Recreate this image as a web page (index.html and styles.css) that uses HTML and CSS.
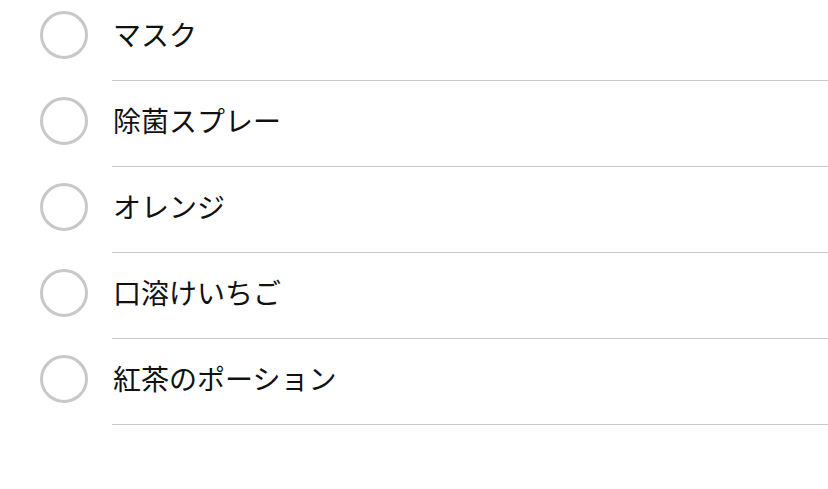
FILE: index.html
```html
<!DOCTYPE html>
<html lang="ja">
<head>
<meta charset="utf-8">
<link rel="stylesheet" href="styles.css">
</head>
<body>
<ul class="list">
  <li class="row"><span class="check"></span><span class="label">マスク</span></li>
  <li class="row"><span class="check"></span><span class="label">除菌スプレー</span></li>
  <li class="row"><span class="check"></span><span class="label">オレンジ</span></li>
  <li class="row"><span class="check"></span><span class="label">口溶けいちご</span></li>
  <li class="row"><span class="check"></span><span class="label">紅茶のポーション</span></li>
</ul>
</body>
</html>
```
FILE: styles.css
```css
html, body {
  margin: 0;
  padding: 0;
  background: #fff;
}
body {
  font-family: "Noto Sans CJK JP", "Noto Sans", sans-serif;
  color: #000;
}
.list {
  list-style: none;
  margin: -5px 0 0 0;
  padding: 0 0 0 40px;
}
.row {
  display: flex;
  align-items: stretch;
}
.check {
  flex: none;
  width: 42px;
  height: 42px;
  border: 3px solid #c8c8c8;
  border-radius: 50%;
  margin-top: 16px;
  margin-right: 24px;
}
.label {
  flex: 1;
  height: 86px;
  box-sizing: border-box;
  border-bottom: 1px solid #c8c8c8;
  padding-top: 16px;
  padding-left: 1px;
  font-size: 28px;
  font-weight: 400;
  line-height: 46px;
  color: #111;
}
```
